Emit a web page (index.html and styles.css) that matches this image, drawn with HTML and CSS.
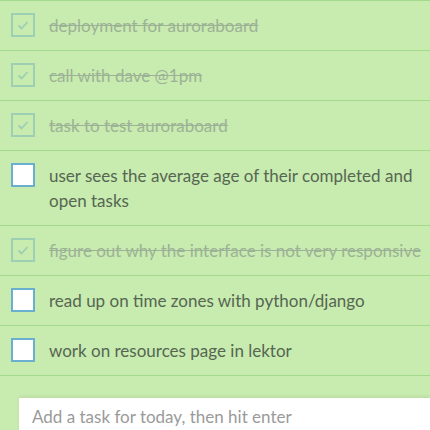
FILE: index.html
```html
<!DOCTYPE html>
<html lang="en">
<head>
    <meta charset="UTF-8">
    <title>Today</title>
    <link rel="stylesheet" href="styles.css">
</head>
<body>
    <ul class="tasks">
        <li class="task done">
            <span class="box"><svg viewBox="0 0 20 20" width="20" height="20"><path d="M5.5 10.5l3 3L14.5 7"/></svg></span>
            <span class="label">deployment for auroraboard</span>
        </li>
        <li class="task done">
            <span class="box"><svg viewBox="0 0 20 20" width="20" height="20"><path d="M5.5 10.5l3 3L14.5 7"/></svg></span>
            <span class="label">call with dave @1pm</span>
        </li>
        <li class="task done">
            <span class="box"><svg viewBox="0 0 20 20" width="20" height="20"><path d="M5.5 10.5l3 3L14.5 7"/></svg></span>
            <span class="label">task to test auroraboard</span>
        </li>
        <li class="task">
            <span class="box"></span>
            <span class="label">user sees the average age of their completed and open tasks</span>
        </li>
        <li class="task done">
            <span class="box"><svg viewBox="0 0 20 20" width="20" height="20"><path d="M5.5 10.5l3 3L14.5 7"/></svg></span>
            <span class="label">figure out why the interface is not very responsive</span>
        </li>
        <li class="task">
            <span class="box"></span>
            <span class="label">read up on time zones with python/django</span>
        </li>
        <li class="task">
            <span class="box"></span>
            <span class="label">work on resources page in lektor</span>
        </li>
    </ul>

    <form class="add-task">
        <input type="text" placeholder="Add a task for today, then hit enter">
    </form>
</body>
</html>
```

FILE: styles.css
```css
:root {
    --bg: #c8ebaf;
    --line: #a3d98a;
    --text: #566652;
    --text-done: #9cb296;
    --box: #6aafcf;
    --box-done: #9ccfb4;
}

body {
    margin: 0;
    background-color: var(--bg);
    font-family: 'Lato', 'Noto Sans', sans-serif;
    color: var(--text);
    overflow: hidden;
}

.tasks {
    list-style: none;
    margin: 0;
    padding: 0;
    border-top: 1px solid var(--line);
}

.task {
    display: flex;
    align-items: flex-start;
    gap: 14px;
    padding: 12px 4px 12px 11px;
    border-bottom: 1px solid var(--line);
}

.box {
    flex: none;
    width: 20px;
    height: 20px;
    border: 2px solid var(--box);
    background: #fff;
}

.box svg {
    display: block;
    fill: none;
    stroke: var(--box-done);
    stroke-width: 1.8;
}

.label {
    font-size: 17px;
    line-height: 25px;
    padding-right: 8px;
}

.task.done .box {
    background: transparent;
    border-color: var(--box-done);
}

.task.done .label {
    color: var(--text-done);
    text-decoration: line-through;
    white-space: nowrap;
    padding-right: 0;
}

.add-task {
    margin: 0;
    padding: 22px 0 0 19px;
}

.add-task input {
    display: block;
    width: 100%;
    box-sizing: border-box;
    height: 44px;
    border: none;
    padding: 0 13px 8px;
    font-family: inherit;
    font-size: 17px;
    background: #fff;
    box-shadow: 0 -2px 3px rgba(0, 0, 0, 0.06);
    outline: none;
}

.add-task input::placeholder {
    color: #9a9a9a;
}
```
